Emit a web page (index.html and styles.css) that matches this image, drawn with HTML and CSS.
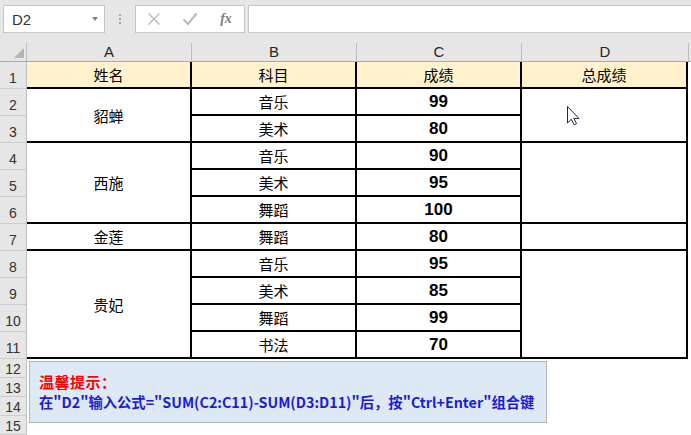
FILE: index.html
```html
<!DOCTYPE html>
<html lang="zh-CN">
<head>
<meta charset="utf-8">
<title>Sheet</title>
<link rel="stylesheet" href="styles.css">
</head>
<body>
<div class="formula-bar">
  <div class="namebox"><span class="ref">D2</span><span class="caret"></span></div>
  <div class="dots"><i></i><i></i><i></i></div>
  <div class="fbtns">
    <svg class="ico" width="14" height="14" viewBox="0 0 14 14"><path d="M1.5 1.5 L12.5 12.5 M12.5 1.5 L1.5 12.5" stroke="#b9b9b9" stroke-width="1.4" fill="none"/></svg>
    <svg class="ico" width="16" height="14" viewBox="0 0 16 14"><path d="M1.5 7.5 L6 12 L14.5 1.5" stroke="#b9b9b9" stroke-width="2" fill="none"/></svg>
    <span class="fx">fx</span>
  </div>
  <div class="finput"></div>
</div>
<div class="colheads">
  <div class="corner"><span class="tri"></span></div>
  <div class="ch w165">A</div>
  <div class="ch w165">B</div>
  <div class="ch w165">C</div>
  <div class="ch w167">D</div>
</div>
<div class="sheet">
  <div class="rowheads">
    <div class="rh">1</div><div class="rh">2</div><div class="rh">3</div><div class="rh">4</div>
    <div class="rh">5</div><div class="rh">6</div><div class="rh">7</div><div class="rh">8</div>
    <div class="rh">9</div><div class="rh">10</div><div class="rh">11</div>
  </div>
  <div class="grid">
    <div class="c hd">姓名</div><div class="c hd">科目</div><div class="c hd">成绩</div><div class="c hd">总成绩</div>
    <div class="c m span2">貂蝉</div><div class="c">音乐</div><div class="c n">99</div><div class="c span2"></div>
    <div class="c">美术</div><div class="c n">80</div>
    <div class="c m span3">西施</div><div class="c">音乐</div><div class="c n">90</div><div class="c span3"></div>
    <div class="c">美术</div><div class="c n">95</div>
    <div class="c">舞蹈</div><div class="c n">100</div>
    <div class="c">金莲</div><div class="c">舞蹈</div><div class="c n">80</div><div class="c"></div>
    <div class="c m span4">贵妃</div><div class="c">音乐</div><div class="c n">95</div><div class="c span4"></div>
    <div class="c">美术</div><div class="c n">85</div>
    <div class="c">舞蹈</div><div class="c n">99</div>
    <div class="c">书法</div><div class="c n">70</div>
  </div>
</div>
<div class="lower">
  <div class="rowheads">
    <div class="rh s">12</div><div class="rh s">13</div><div class="rh s">14</div><div class="rh s">15</div>
  </div>
  <div class="canvas">
    <div class="note">
      <div class="tip">温馨提示：</div>
      <div class="msg">在"D2"输入公式="SUM(C2:C11)-SUM(D3:D11)"后，按"Ctrl+Enter"组合键</div>
    </div>
  </div>
</div>
<svg class="cursor" width="14" height="20" viewBox="0 0 14 20"><path d="M0.5 0.5 V17 L4.3 13.3 L7.3 18.8 L9.6 17.7 L6.8 12.4 H12 Z" fill="#fff" stroke="#2b2150" stroke-width="1" stroke-linejoin="miter"/></svg>
</body>
</html>
```
FILE: styles.css
```css
html, body {
  margin: 0;
  padding: 0;
}
body {
  width: 691px;
  height: 435px;
  overflow: hidden;
  background: #ffffff;
  font-family: "Noto Sans CJK SC", sans-serif;
}
.formula-bar {
  height: 43px;
  box-sizing: border-box;
  background: #e6e6e6;
  display: flex;
  align-items: flex-start;
  padding-top: 5px;
}
.namebox {
  margin-left: 3px;
  width: 102px;
  height: 28px;
  box-sizing: border-box;
  border: 1px solid #c6c6c6;
  background: #fff;
  display: flex;
  align-items: center;
  justify-content: space-between;
  padding: 0 6px 0 8px;
}
.ref {
  font: 15px "Liberation Sans", sans-serif;
  color: #333;
}
.caret {
  width: 0;
  height: 0;
  border-left: 3.5px solid transparent;
  border-right: 3.5px solid transparent;
  border-top: 4px solid #8a7b7b;
}
.dots {
  width: 30px;
  height: 28px;
  display: flex;
  flex-direction: column;
  align-items: center;
  justify-content: center;
  gap: 2px;
}
.dots i {
  display: block;
  width: 2px;
  height: 2px;
  background: #a8a8a8;
}
.fbtns {
  width: 110px;
  height: 28px;
  box-sizing: border-box;
  border: 1px solid #c6c6c6;
  background: #fff;
  display: grid;
  grid-template-columns: 36px 36px 36px;
  align-items: center;
  justify-items: center;
}
.fx {
  font: italic bold 14px "Liberation Serif", serif;
  color: #7f7f7f;
}
.finput {
  margin-left: 3px;
  flex: 1;
  height: 28px;
  box-sizing: border-box;
  border: 1px solid #c6c6c6;
  border-right: none;
  background: #fff;
}
.colheads {
  display: flex;
  height: 19px;
  box-sizing: border-box;
  background: #e6e6e6;
  border-bottom: 1px solid #ababab;
}
.corner {
  width: 27px;
  box-sizing: border-box;
  border-right: 1px solid #c0c0c0;
  display: flex;
  justify-content: flex-end;
  align-items: flex-end;
  padding: 0 2px 3px 0;
}
.tri {
  width: 0;
  height: 0;
  border-left: 10px solid transparent;
  border-bottom: 10px solid #b4b4b4;
}
.ch {
  box-sizing: border-box;
  border-right: 1px solid #bdbdbd;
  text-align: center;
  font: 15px/18px "Liberation Sans", sans-serif;
  color: #262626;
}
.w165 { width: 165px; }
.w167 { width: 167px; }
.sheet {
  display: flex;
}
.rowheads {
  width: 27px;
  box-sizing: border-box;
  background: #e6e6e6;
  border-right: 1px solid #c0c0c0;
}
.rh {
  height: 27px;
  box-sizing: border-box;
  border-bottom: 1px solid #cdcdcd;
  text-align: center;
  font: 14px/18px "Liberation Sans", sans-serif;
  color: #333;
  padding-top: 7px;
}
.rh.s {
  height: 19px;
  padding-top: 1px;
}
.grid {
  display: grid;
  grid-template-columns: 163px 163px 163px 164px;
  grid-template-rows: repeat(11, 25px);
  gap: 2px;
  padding: 0 2px 2px 0;
  background: #000;
}
.c {
  background: #fff;
  display: flex;
  align-items: center;
  justify-content: center;
  font: 15px/18px "Noto Sans CJK SC", sans-serif;
  color: #000;
  padding-top: 1px;
  box-sizing: border-box;
}
.hd { background: #fff2cc; }
.n { font: bold 17px/18px "Liberation Sans", sans-serif; }
.span2 { grid-row: span 2; }
.span3 { grid-row: span 3; }
.span4 { grid-row: span 4; }
.lower {
  display: flex;
}
.canvas {
  padding: 2px 0 0 2px;
}
.note {
  width: 518px;
  height: 62px;
  box-sizing: border-box;
  border: 1px solid #b4b4b4;
  background: #dde9f5;
  padding: 10px 0 0 9px;
  font: bold 15px/20px "Noto Sans CJK SC", sans-serif;
}
.tip { color: #ff0000; letter-spacing: 0.5px; }
.msg { color: #1c1cd6; white-space: nowrap; font-size: 14.3px; }
.cursor {
  position: absolute;
  left: 567px;
  top: 106px;
}
```
